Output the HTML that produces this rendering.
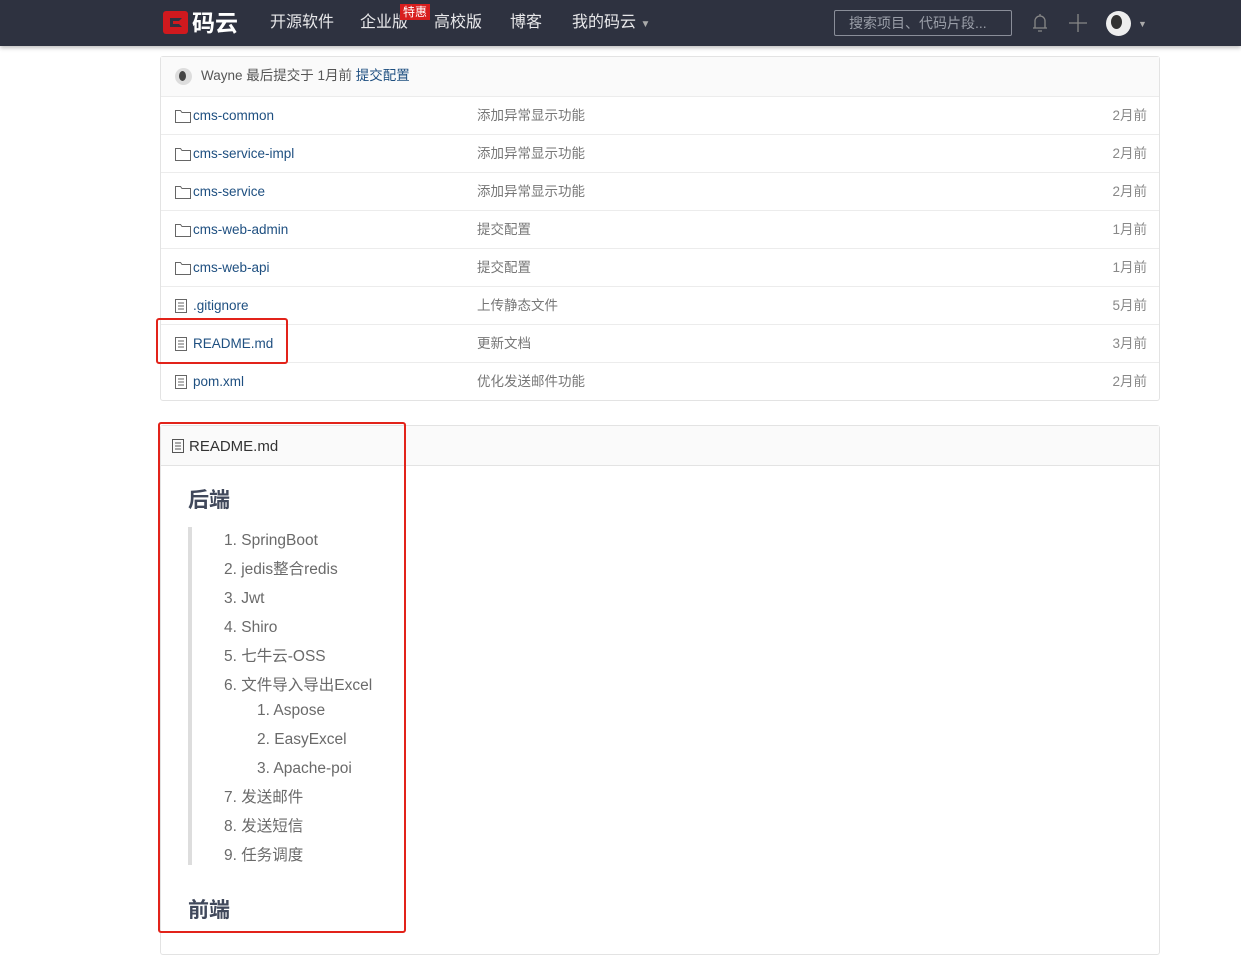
<!DOCTYPE html><html><head><meta charset="utf-8"><style>
*{box-sizing:border-box;margin:0;padding:0}
body{width:1241px;height:936px;overflow:hidden;background:#fff;font-family:"Liberation Sans","Noto Sans CJK SC",sans-serif;position:relative}
span,div{line-height:20px}
.nav{position:absolute;left:0;top:0;width:1241px;height:46px;background:#2e3240;box-shadow:0 2px 4px rgba(0,0,0,.25)}
.nav span{position:absolute;top:12px;color:#e8e8ea;font-size:16px;line-height:22px}
.box{position:absolute;left:160px;width:1000px;border:1px solid #e3e3e3;border-radius:3px}
.row{position:absolute;left:0;width:998px;height:38px;border-top:1px solid #ececec;font-size:13.5px}
.row .n{position:absolute;left:32px;top:9px;color:#1e4f80}
.row .m{position:absolute;left:316px;top:9px;color:#777}
.row .t{position:absolute;right:12px;top:9px;color:#888}
.ic{position:absolute;left:14px;top:12px}
.li{position:absolute;color:#6a6a6a;font-size:15.5px;line-height:20px}
.h{position:absolute;left:188px;font-size:21px;font-weight:bold;color:#40485b;line-height:28px}
.red{position:absolute;border:2.5px solid #e2231a;border-radius:3px}
</style></head><body>
<div class="nav">
<div style="position:absolute;left:163px;top:11px;width:25px;height:23px;background:#d0191e;border-radius:3px"></div>
<div style="position:absolute;left:170px;top:18px;width:12px;height:9px;border:3px solid #2e3240;border-right-color:transparent"></div>
<span style="left:192px;top:9px;font-size:23px;font-weight:bold;color:#fff;line-height:28px">码云</span>
<span style="left:270px">开源软件</span>
<span style="left:360px">企业版</span>
<div style="position:absolute;left:400px;top:4px;background:#d81e1e;color:#fff;font-size:12px;padding:0 3px;line-height:16px">特惠</div>
<span style="left:434px">高校版</span>
<span style="left:510px">博客</span>
<span style="left:572px">我的码云 <small style="font-size:10px;color:#aaa">▼</small></span>
<div style="position:absolute;left:834px;top:10px;width:178px;height:26px;border:1px solid #8a8e99;border-radius:2px;color:#9a9ea8;font-size:14px;padding:2px 14px;line-height:20px">搜索项目、代码片段...</div>
<svg style="position:absolute;left:1031px;top:12px" width="18" height="22"><path d="M4 16V9a5 5 0 0 1 10 0v7M2 16h14M7 19h4M9 2v2" stroke="#888" fill="none" stroke-width="1.3"/></svg>
<svg style="position:absolute;left:1068px;top:13px" width="20" height="20"><path d="M10 1v18M1 10h18" stroke="#888" stroke-width="1.3"/></svg>
<div style="position:absolute;left:1106px;top:11px;width:25px;height:25px;border-radius:50%;background:#eee"><div style="position:absolute;left:5px;top:4px;width:11px;height:14px;border-radius:50%;background:#333"></div></div>
<span style="left:1138px;top:13px;font-size:9px;color:#aaa">▼</span>
</div>
<div class="box" style="top:56px;height:345px">
<div style="height:39px;background:#fafafa;position:relative;font-size:13.5px">
<div style="position:absolute;left:14px;top:11px;width:17px;height:17px;border-radius:50%;background:#ddd"><div style="position:absolute;left:4px;top:3px;width:7px;height:10px;border-radius:50%;background:#444"></div></div>
<span style="position:absolute;left:40px;top:9px;color:#555">Wayne 最后提交于 1月前 <span style="color:#1e4f80">提交配置</span></span></div>
<div class="row" style="top:39px"><svg class="ic" width="16" height="14"><path d="M.5 1.5h5l1.5 2h8.5v10H.5z" fill="none" stroke="#666"/></svg><span class="n">cms-common</span><span class="m">添加异常显示功能</span><span class="t">2月前</span></div>
<div class="row" style="top:77px"><svg class="ic" width="16" height="14"><path d="M.5 1.5h5l1.5 2h8.5v10H.5z" fill="none" stroke="#666"/></svg><span class="n">cms-service-impl</span><span class="m">添加异常显示功能</span><span class="t">2月前</span></div>
<div class="row" style="top:115px"><svg class="ic" width="16" height="14"><path d="M.5 1.5h5l1.5 2h8.5v10H.5z" fill="none" stroke="#666"/></svg><span class="n">cms-service</span><span class="m">添加异常显示功能</span><span class="t">2月前</span></div>
<div class="row" style="top:153px"><svg class="ic" width="16" height="14"><path d="M.5 1.5h5l1.5 2h8.5v10H.5z" fill="none" stroke="#666"/></svg><span class="n">cms-web-admin</span><span class="m">提交配置</span><span class="t">1月前</span></div>
<div class="row" style="top:191px"><svg class="ic" width="16" height="14"><path d="M.5 1.5h5l1.5 2h8.5v10H.5z" fill="none" stroke="#666"/></svg><span class="n">cms-web-api</span><span class="m">提交配置</span><span class="t">1月前</span></div>
<div class="row" style="top:229px"><svg class="ic" width="12" height="14"><path d="M.5.5h11v13H.5zM3 4h6M3 7h6M3 10h6" fill="none" stroke="#666"/></svg><span class="n">.gitignore</span><span class="m">上传静态文件</span><span class="t">5月前</span></div>
<div class="row" style="top:267px"><svg class="ic" width="12" height="14"><path d="M.5.5h11v13H.5zM3 4h6M3 7h6M3 10h6" fill="none" stroke="#666"/></svg><span class="n">README.md</span><span class="m">更新文档</span><span class="t">3月前</span></div>
<div class="row" style="top:305px"><svg class="ic" width="12" height="14"><path d="M.5.5h11v13H.5zM3 4h6M3 7h6M3 10h6" fill="none" stroke="#666"/></svg><span class="n">pom.xml</span><span class="m">优化发送邮件功能</span><span class="t">2月前</span></div>
</div>
<div class="box" style="top:425px;height:530px">
<div style="height:40px;background:#fafafa;border-bottom:1px solid #e3e3e3;position:relative"><svg style="position:absolute;left:11px;top:13px" width="12" height="14"><path d="M.5.5h11v13H.5zM3 4h6M3 7h6M3 10h6" fill="none" stroke="#555"/></svg><span style="position:absolute;left:28px;top:11px;font-size:15px;color:#333">README.md</span></div>
</div>
<div class="h" style="top:487px">后端</div>
<div style="position:absolute;left:188px;top:527px;width:4px;height:338px;background:#ddd"></div>
<div class="li" style="left:224px;top:531px">1. SpringBoot</div>
<div class="li" style="left:224px;top:560px">2. jedis整合redis</div>
<div class="li" style="left:224px;top:589px">3. Jwt</div>
<div class="li" style="left:224px;top:618px">4. Shiro</div>
<div class="li" style="left:224px;top:647px">5. 七牛云-OSS</div>
<div class="li" style="left:224px;top:676px">6. 文件导入导出Excel</div>
<div class="li" style="left:257px;top:701px">1. Aspose</div>
<div class="li" style="left:257px;top:730px">2. EasyExcel</div>
<div class="li" style="left:257px;top:759px">3. Apache-poi</div>
<div class="li" style="left:224px;top:788px">7. 发送邮件</div>
<div class="li" style="left:224px;top:817px">8. 发送短信</div>
<div class="li" style="left:224px;top:846px">9. 任务调度</div>
<div class="h" style="top:897px">前端</div>
<div class="red" style="left:156px;top:318px;width:132px;height:46px"></div>
<div class="red" style="left:158px;top:422px;width:248px;height:511px"></div>
</body></html>
